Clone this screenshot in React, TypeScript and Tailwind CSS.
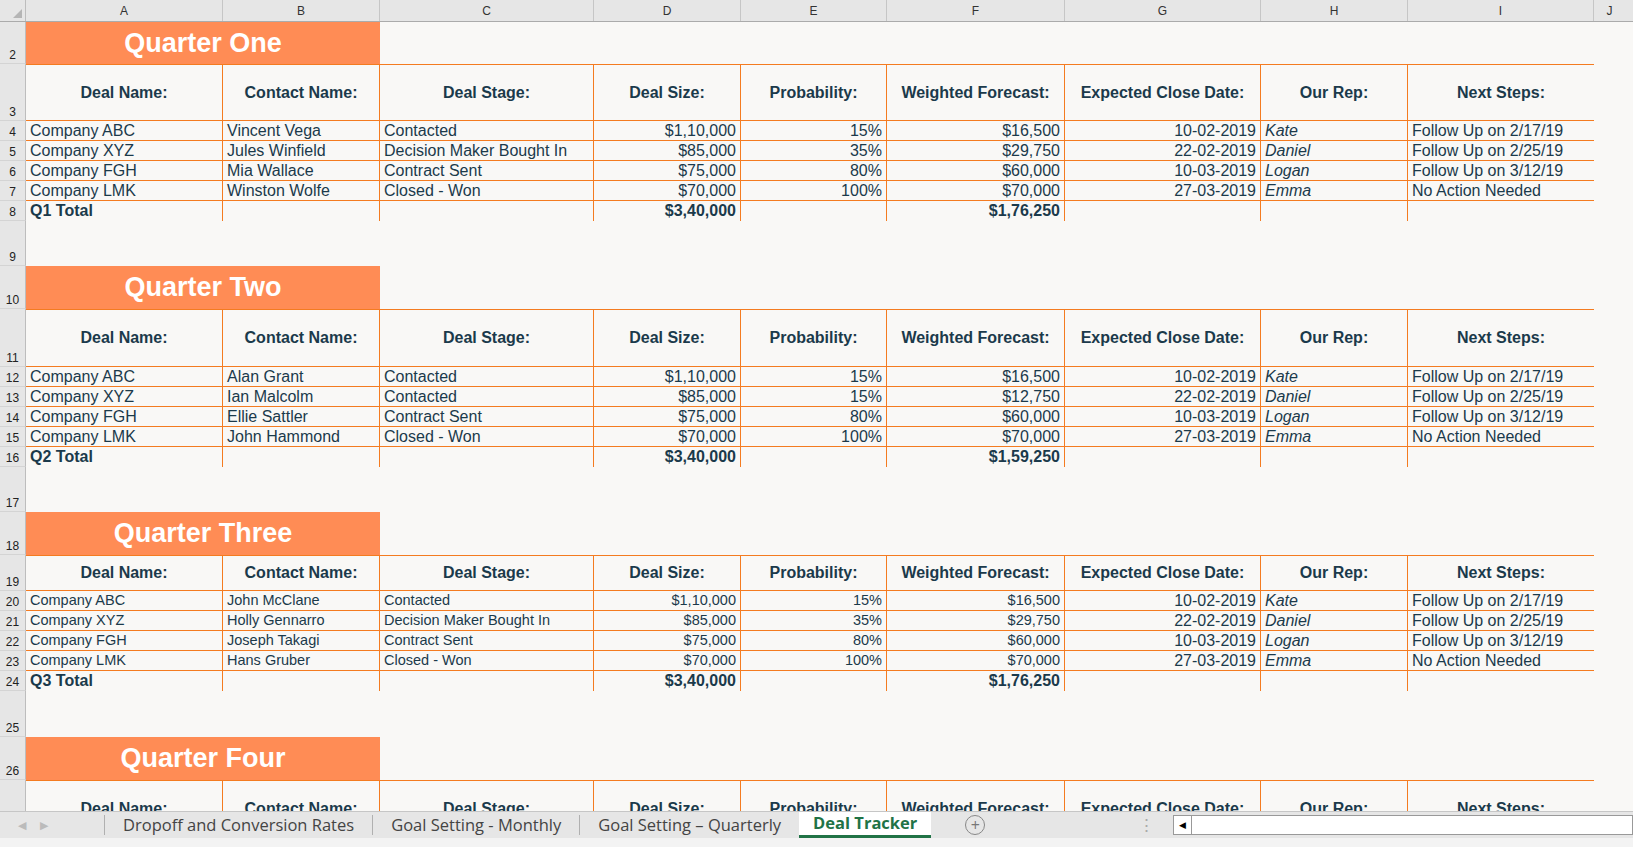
import React from "react";

const W = [197, 157, 214, 147, 146, 178, 196, 147, 186];
const LETTERS = ["A", "B", "C", "D", "E", "F", "G", "H", "I"];
const HEAD = ["Deal Name:", "Contact Name:", "Deal Stage:", "Deal Size:", "Probability:", "Weighted Forecast:", "Expected Close Date:", "Our Rep:", "Next Steps:"];
const ALIGN = ["text-left", "text-left", "text-left", "text-right", "text-right", "text-right", "text-right", "text-left italic", "text-left"];

type Q = { title: string; n: number; rows: string[][]; total: [string, string]; small?: boolean };

const quarters: Q[] = [
  {
    title: "Quarter One", n: 2, total: ["$3,40,000", "$1,76,250"],
    rows: [
      ["Company ABC", "Vincent Vega", "Contacted", "$1,10,000", "15%", "$16,500", "10-02-2019", "Kate", "Follow Up on 2/17/19"],
      ["Company XYZ", "Jules Winfield", "Decision Maker Bought In", "$85,000", "35%", "$29,750", "22-02-2019", "Daniel", "Follow Up on 2/25/19"],
      ["Company FGH", "Mia Wallace", "Contract Sent", "$75,000", "80%", "$60,000", "10-03-2019", "Logan", "Follow Up on 3/12/19"],
      ["Company LMK", "Winston Wolfe", "Closed - Won", "$70,000", "100%", "$70,000", "27-03-2019", "Emma", "No Action Needed"],
    ],
  },
  {
    title: "Quarter Two", n: 10, total: ["$3,40,000", "$1,59,250"],
    rows: [
      ["Company ABC", "Alan Grant", "Contacted", "$1,10,000", "15%", "$16,500", "10-02-2019", "Kate", "Follow Up on 2/17/19"],
      ["Company XYZ", "Ian Malcolm", "Contacted", "$85,000", "15%", "$12,750", "22-02-2019", "Daniel", "Follow Up on 2/25/19"],
      ["Company FGH", "Ellie Sattler", "Contract Sent", "$75,000", "80%", "$60,000", "10-03-2019", "Logan", "Follow Up on 3/12/19"],
      ["Company LMK", "John Hammond", "Closed - Won", "$70,000", "100%", "$70,000", "27-03-2019", "Emma", "No Action Needed"],
    ],
  },
  {
    title: "Quarter Three", n: 18, total: ["$3,40,000", "$1,76,250"], small: true,
    rows: [
      ["Company ABC", "John McClane", "Contacted", "$1,10,000", "15%", "$16,500", "10-02-2019", "Kate", "Follow Up on 2/17/19"],
      ["Company XYZ", "Holly Gennarro", "Decision Maker Bought In", "$85,000", "35%", "$29,750", "22-02-2019", "Daniel", "Follow Up on 2/25/19"],
      ["Company FGH", "Joseph Takagi", "Contract Sent", "$75,000", "80%", "$60,000", "10-03-2019", "Logan", "Follow Up on 3/12/19"],
      ["Company LMK", "Hans Gruber", "Closed - Won", "$70,000", "100%", "$70,000", "27-03-2019", "Emma", "No Action Needed"],
    ],
  },
];

function RowNum({ n, h }: { n?: number; h: number }) {
  return (
    <div className="w-[26px] shrink-0 bg-[#e6e6e6] border-r border-[#bdbdbd] border-b border-b-[#d4d4d4] flex items-end justify-center text-[12px] text-[#222] leading-[16px]" style={{ height: h }}>
      {n ?? ""}
    </div>
  );
}

function Spacer({ n, h }: { n: number; h: number }) {
  return (
    <div className="flex">
      <RowNum n={n} h={h} />
      <div className="flex-1" />
    </div>
  );
}

function Title({ n, text, h }: { n: number; text: string; h: number }) {
  return (
    <div className="flex">
      <RowNum n={n} h={h} />
      <div className="w-[354px] bg-[#ff8c55] text-white font-bold text-[27px] flex items-center justify-center" style={{ height: h }}>{text}</div>
      <div className="flex-1" />
    </div>
  );
}

function Header({ n, h }: { n: number; h: number }) {
  return (
    <div className="flex">
      <RowNum n={n} h={h} />
      {HEAD.map((t, i) => (
        <div key={i} className={`shrink-0 flex items-center justify-center font-bold text-[16px] text-[#1b3a4b] border-t border-b border-[#f47b20] ${i < 8 ? "border-r" : ""}`} style={{ width: W[i], height: h }}>{t}</div>
      ))}
    </div>
  );
}

function DataRow({ n, cells, small, last }: { n: number; cells: string[]; small?: boolean; last?: boolean }) {
  return (
    <div className="flex">
      <RowNum n={n} h={20} />
      {cells.map((t, i) => (
        <div key={i} className={`shrink-0 h-[20px] px-[4px] ${small && i < 6 && !last ? "text-[14.5px]" : "text-[16px]"} leading-[19px] whitespace-nowrap overflow-hidden text-[#1b3a4b] border-[#f47b20] ${last ? "" : "border-b"} ${i < 8 ? "border-r" : ""} ${last ? "font-bold" : ""} ${ALIGN[i]}`} style={{ width: W[i] }}>{t}</div>
      ))}
    </div>
  );
}

function Quarter({ q, headH, titleH }: { q: Q; headH: number; titleH: number }) {
  const label = q.title === "Quarter One" ? "Q1" : q.title === "Quarter Two" ? "Q2" : "Q3";
  return (
    <>
      <Title n={q.n} text={q.title} h={titleH} />
      <Header n={q.n + 1} h={headH} />
      {q.rows.map((r, i) => <DataRow key={i} n={q.n + 2 + i} cells={r} small={q.small} />)}
      <DataRow n={q.n + 6} cells={[`${label} Total`, "", "", q.total[0], "", q.total[1], "", "", ""]} last />
    </>
  );
}

export default function App() {
  return (
    <div className="h-screen w-full overflow-hidden flex flex-col bg-[#f9f8f6]" style={{ fontFamily: '"Liberation Sans", Arial, sans-serif' }}>
      <div className="flex-1 overflow-hidden">
        <div className="flex h-[22px] bg-[#e6e6e6] border-b border-[#ababab] text-[12px] text-[#333]">
          <div className="w-[26px] shrink-0 border-r border-[#bdbdbd] flex items-end justify-end p-[3px]">
            <div className="w-0 h-0 border-l-[9px] border-l-transparent border-b-[9px] border-b-[#b5b5b5]" />
          </div>
          {LETTERS.map((l, i) => (
            <div key={l} className="shrink-0 border-r border-[#c6c6c6] flex items-center justify-center" style={{ width: W[i] }}>{l}</div>
          ))}
          <div className="flex-1 flex items-center justify-center pr-[8px]">J</div>
        </div>
        <Quarter q={quarters[0]} headH={57} titleH={42} />
        <Spacer n={9} h={45} />
        <Quarter q={quarters[1]} headH={58} titleH={43} />
        <Spacer n={17} h={45} />
        <Quarter q={quarters[2]} headH={36} titleH={43} />
        <Spacer n={25} h={46} />
        <Title n={26} text="Quarter Four" h={43} />
        <Header n={27} h={57} />
      </div>
      <div className="h-[27px] shrink-0 bg-[#e6e6e6] border-t border-[#c6c6c6] flex items-stretch text-[16.5px] text-[#444]" style={{ fontFamily: '"Open Sans", "Liberation Sans", sans-serif' }}>
        <div className="w-[104px] flex items-center gap-[14px] pl-[18px] text-[#bbb] text-[11px]">
          <span>◀</span><span>▶</span>
        </div>
        {["Dropoff and Conversion Rates", "Goal Setting - Monthly", "Goal Setting – Quarterly"].map(t => (
          <div key={t} className="flex items-center px-[18px] border-l border-[#b0b0b0] my-[3px]">{t}</div>
        ))}
        <div className="flex items-center px-[14px] bg-white text-[#217346] font-bold border-b-[3px] border-[#217346]">Deal Tracker</div>
        <div className="flex items-center ml-[34px]">
          <div className="w-[20px] h-[20px] rounded-full border border-[#888] flex items-center justify-center text-[#777] text-[16px] leading-none">+</div>
        </div>
        <div className="ml-auto w-[495px] flex items-center">
          <div className="text-[#aaa] mr-[18px] leading-none">⋮</div>
          <div className="flex-1 h-[20px] bg-white border border-[#999] flex items-center">
            <div className="w-[18px] h-full border-r border-[#999] flex items-center justify-center text-[9px] text-black">◀</div>
          </div>
        </div>
      </div>
      <div className="h-[9px] shrink-0 bg-[#f3f3f3]" />
    </div>
  );
}
